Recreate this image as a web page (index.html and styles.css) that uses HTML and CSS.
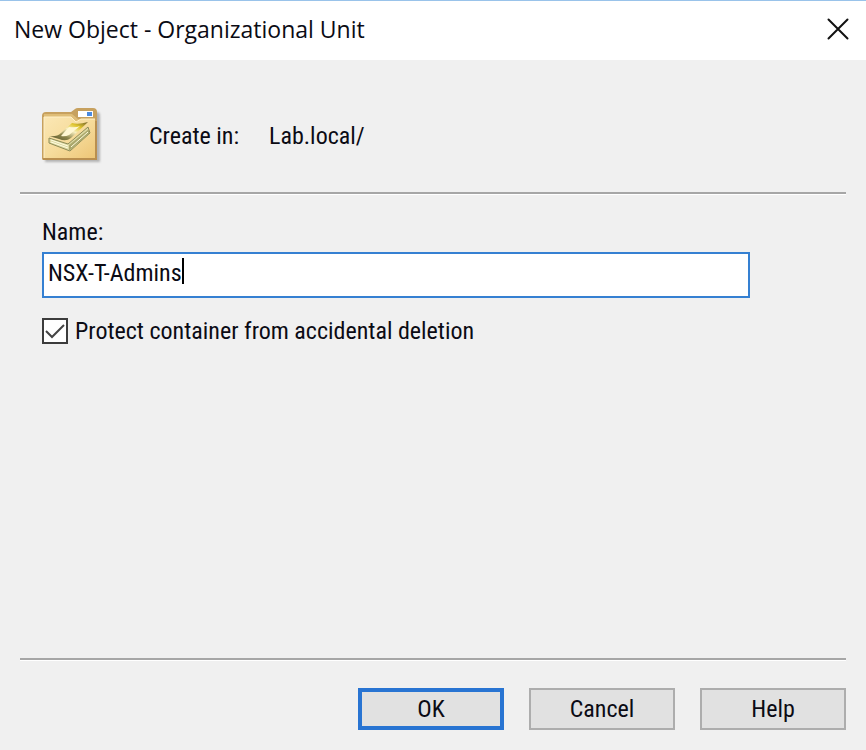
FILE: index.html
```html
<!DOCTYPE html>
<html lang="en">
<head>
<meta charset="utf-8">
<title>New Object - Organizational Unit</title>
<link rel="stylesheet" href="styles.css">
</head>
<body>
<main class="dialog">
  <header class="titlebar">
    <h1 class="title">New Object - Organizational Unit</h1>
    <button class="close" type="button" aria-label="Close">
      <svg width="22" height="22" viewBox="0 0 22 22"><path d="M1.5 1.5l19 19M20.5 1.5l-19 19" stroke="#111" stroke-width="2" stroke-linecap="round"/></svg>
    </button>
  </header>
  <form class="content">
    <section class="location">
      <svg class="folder" width="62" height="58" viewBox="0 0 62 58" aria-hidden="true">
        <defs>
          <linearGradient id="front" x1="0" y1="0" x2="1" y2="1">
            <stop offset="0" stop-color="#fbe7b4"/><stop offset=".5" stop-color="#f6dc9c"/><stop offset="1" stop-color="#edc677"/>
          </linearGradient>
          <linearGradient id="cover" x1="0" y1="1" x2="1" y2="0">
            <stop offset="0" stop-color="#55512a"/><stop offset=".3" stop-color="#8b8449"/><stop offset=".55" stop-color="#f7efc0"/><stop offset=".75" stop-color="#dfc52c"/><stop offset="1" stop-color="#6f602d"/>
          </linearGradient>
          <filter id="soft"><feGaussianBlur stdDeviation="1"/></filter>
        </defs>
        <path d="M4 10h30l5-5h17q3 0 3 4v46H4z" fill="#777" opacity=".5" filter="url(#soft)"/>
        <path d="M1 52V9q0-4 4-4h25l4-3q1-1 3-1h15q4 0 4 4v46q0 2-2 2H3q-2 0-2-1z" fill="#c7a15f"/>
        <path d="M3 7h28l6 5h17v3H3z" fill="#dfbd77"/>
        <path d="M37 4h15v6H37z" fill="#fff"/><path d="M46 5h5v4h-5z" fill="#4b8be0"/>
        <path d="M3 10h27l5 5 5-3h14v39H3z" fill="url(#front)"/>
        <path d="M3 51V10h27l5 5 5-3h14" fill="none" stroke="#fff0c8"/>
        <path d="M2 52h53V14" fill="none" stroke="#b98f4f" stroke-width="2"/>
        <path d="M8 31l19 6 20-17 2 6-20 18-21-8z" fill="#ddd9a2" stroke="#8d8b57"/>
        <path d="M28 38v6l20-17v-5z" fill="#aaa76c"/>
        <path d="M10 33l17 6M10 35l17 6M30 40l17-15" fill="none" stroke="#fffde0"/>
        <path d="M8 29q8 1 12-3l11-10q6 2 16-1L30 31q-5 4-12 1z" fill="url(#cover)"/>
        <path d="M28 20q7 1 11-1l-11 9q-4 2-8 1z" fill="#fff7d2"/>
      </svg>
      <span class="caption">Create in:</span>
      <output class="path">Lab.local/</output>
    </section>
    <hr class="rule">
    <section class="fields">
      <label class="label" for="name">Name:</label>
      <div class="textbox"><input class="name" id="name" type="text" value="NSX-T-Admins"><span class="caret"></span></div>
      <div class="option">
        <input class="check" id="protect" type="checkbox" checked>
        <svg class="tick" width="26" height="26" viewBox="0 0 26 26" aria-hidden="true"><path d="M4 13l6 6L22 7" fill="none" stroke="#444" stroke-width="2"/></svg>
        <label for="protect">Protect container from accidental deletion</label>
      </div>
    </section>
    <hr class="rule">
    <footer class="actions">
      <button class="button primary" type="submit">OK</button>
      <button class="button" type="button">Cancel</button>
      <button class="button" type="button">Help</button>
    </footer>
  </form>
</main>
</body>
</html>
```
FILE: styles.css
```css
* { box-sizing: border-box; }
body { margin: 0; background: #f0f0f0; color: #0b0b14; font: 24px/30px "Roboto Condensed", Roboto, sans-serif; }
.dialog { display: flex; flex-direction: column; min-height: 100vh; }
.titlebar { display: flex; align-items: center; justify-content: space-between; height: 60px; padding: 0 17px 4px 14px; border-top: 1px solid #99c3ea; background: #fff; }
.title { margin: 0; font: 23px/32px "Open Sans", sans-serif; }
.close { display: flex; padding: 0; border: 0; background: none; }
.content { display: flex; flex: 1; flex-direction: column; padding: 0 20px 20px; }
.location { display: flex; align-items: center; height: 132px; padding: 20px 21px 0; }
.folder { margin-right: 46px; }
.caption { margin-right: 30px; }
.rule { width: 100%; height: 3px; margin: 0; border: 0; border-top: 2px solid #a6a6a6; border-bottom: 1px solid #fff; }
.fields { flex: 1; padding: 22px 96px 0 22px; }
.label { display: block; margin-bottom: 5px; }
.textbox { display: flex; height: 46px; padding: 4px; border: 2px solid #3580d2; background: #fff; }
.name { field-sizing: content; height: 30px; padding: 0; border: 0; outline: 0; background: none; color: inherit; font: inherit; }
.caret { width: 2px; height: 26px; background: #000; }
.option { position: relative; display: flex; align-items: center; gap: 7px; margin-top: 18px; }
.check { appearance: none; width: 26px; height: 26px; margin: 0; border: 2px solid #3c3c3c; background: #fff; }
.tick { position: absolute; left: 0; visibility: hidden; pointer-events: none; }
.check:checked + .tick { visibility: visible; }
.actions { display: flex; justify-content: flex-end; gap: 25px; padding-top: 27px; }
.button { width: 146px; height: 42px; padding: 0; border: 2px solid #adadad; background: #e1e1e1; color: inherit; font: inherit; }
.primary { border: 4px solid #2874d2; }
```
